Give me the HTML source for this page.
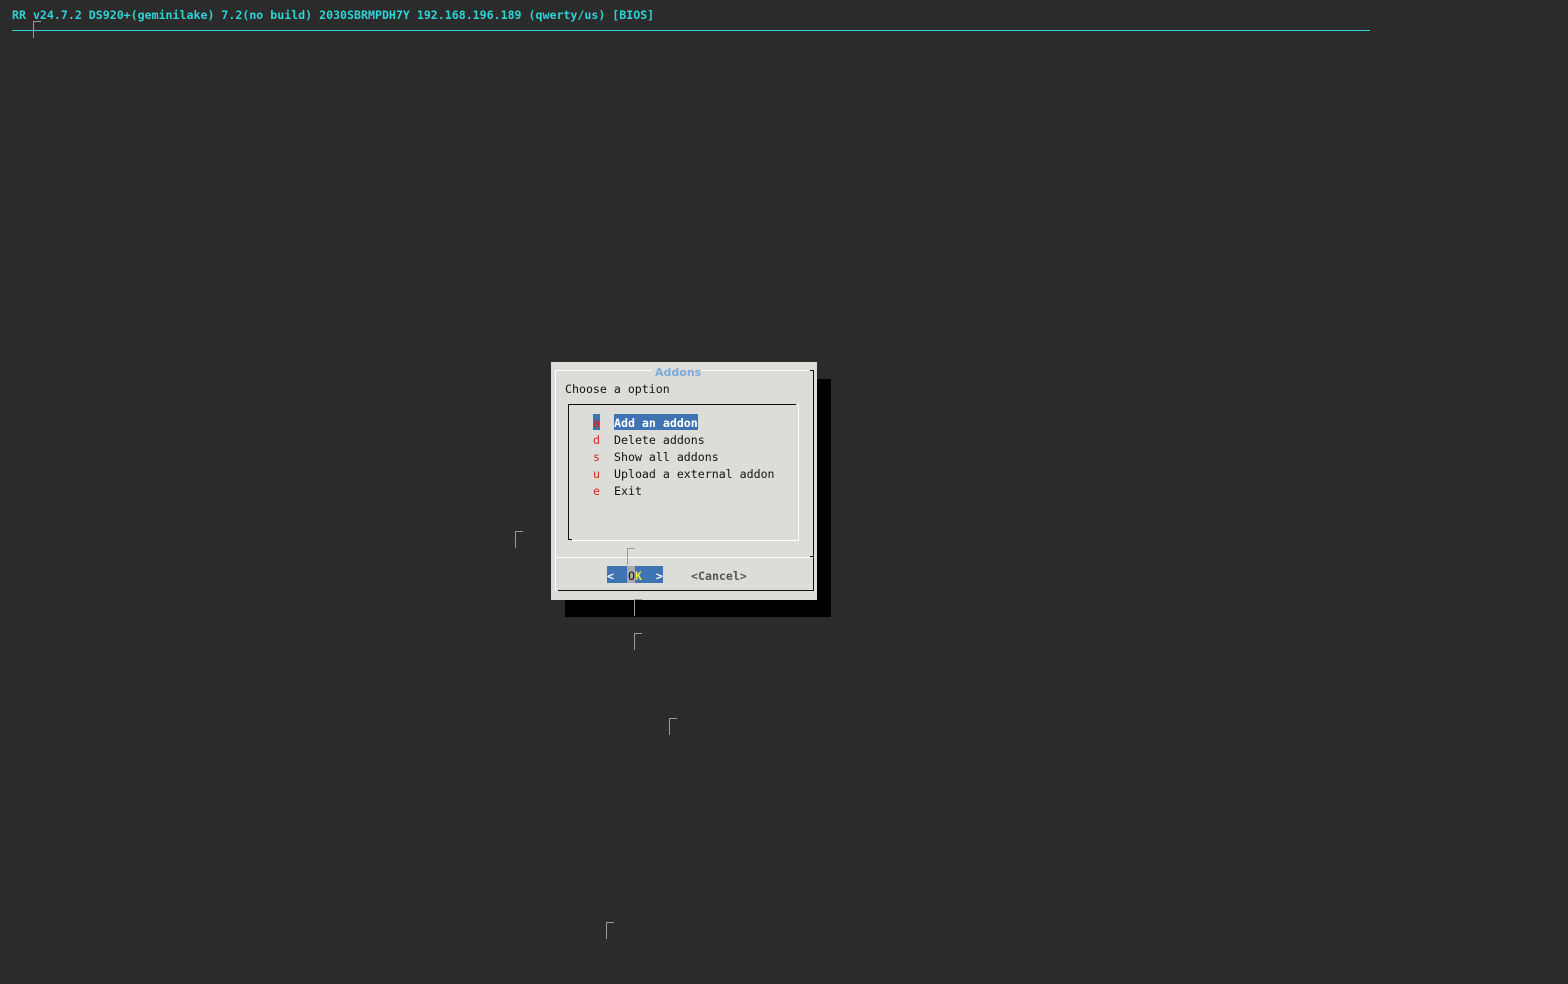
<!DOCTYPE html><html><head><style>
body{margin:0;width:1568px;height:984px;background:#2b2b2b;position:relative;overflow:hidden;font-family:"DejaVu Sans Mono","Liberation Mono",monospace}
.a{position:absolute}
.t{font-size:11.6px;line-height:17px;white-space:pre;color:#111}
.cm{position:absolute;width:7px;height:16px;border-top:1px solid #9a9a9a;border-left:1px solid #9a9a9a}
</style></head><body>
<div class="a t" style="left:12px;top:7px;font-weight:bold;color:#2fd3d6">RR v24.7.2 DS920+(geminilake) 7.2(no build) 2030SBRMPDH7Y 192.168.196.189 (qwerty/us) [BIOS]</div>
<div class="a" style="left:12px;top:30px;width:1358px;height:1px;background:#2fd3d6"></div>
<div class="cm" style="left:33px;top:21px"></div>

<div class="a" style="left:565px;top:379px;width:266px;height:238px;background:#000"></div>
<div class="a" style="left:551px;top:362px;width:266px;height:238px;background:#dcddd8"></div>
<div class="a" style="left:555px;top:370px;width:255px;height:1px;background:#fff"></div>
<div class="a" style="left:555px;top:370px;width:1px;height:221px;background:#fff"></div>
<div class="a" style="left:810px;top:370px;width:4px;height:1px;background:#111"></div>
<div class="a" style="left:813px;top:370px;width:1px;height:221px;background:#111"></div>
<div class="a" style="left:558px;top:590px;width:256px;height:1px;background:#111"></div>
<div class="a" style="left:555px;top:557px;width:255px;height:1px;background:#fff"></div>
<div class="a" style="left:810px;top:556px;width:4px;height:1px;background:#111"></div>
<div class="a" style="left:652px;top:363px;width:50px;height:16px;background:#dcddd8"></div>
<div class="a t" style="left:655px;top:364px;color:#7aaad8;font-weight:bold;font-family:'DejaVu Sans',sans-serif;font-size:11px">Addons</div>
<div class="a t" style="left:565px;top:381px">Choose a option</div>
<div class="a" style="left:568px;top:404px;width:228px;height:1px;background:#111"></div>
<div class="a" style="left:568px;top:404px;width:1px;height:136px;background:#111"></div>
<div class="a" style="left:568px;top:539px;width:4px;height:1px;background:#111"></div>
<div class="a" style="left:572px;top:540px;width:227px;height:1px;background:#fff"></div>
<div class="a" style="left:798px;top:404px;width:1px;height:136px;background:#fff"></div>
<div class="a" style="left:593px;top:414px;width:7px;height:16px;background:#3f74b2"></div>
<div class="a" style="left:614px;top:414px;width:84px;height:16px;background:#3f74b2"></div>
<div class="a t" style="left:593px;top:415px;color:#d8261c">a
d
s
u
e</div>
<div class="a t" style="left:614px;top:415px"><span style="color:#fff;font-weight:bold">Add an addon</span>
Delete addons
Show all addons
Upload a external addon
Exit</div>
<div class="a" style="left:607px;top:566px;width:56px;height:17px;background:#3f74b2"></div>
<div class="a" style="left:627px;top:566px;width:8px;height:17px;background:#aaa"></div>
<div class="a t" style="left:607px;top:568px;color:#fff;font-weight:bold">&lt;  <span style="color:#111;font-weight:normal">O</span><span style="color:#f3e24a">K</span>  &gt;</div>
<div class="a t" style="left:691px;top:568px;color:#555;font-weight:bold">&lt;Cancel&gt;</div>

<div class="cm" style="left:627px;top:548px"></div>
<div class="cm" style="left:634px;top:599px"></div>
<div class="cm" style="left:515px;top:531px"></div>
<div class="cm" style="left:634px;top:633px"></div>
<div class="cm" style="left:669px;top:718px"></div>
<div class="cm" style="left:606px;top:922px"></div>
</body></html>
